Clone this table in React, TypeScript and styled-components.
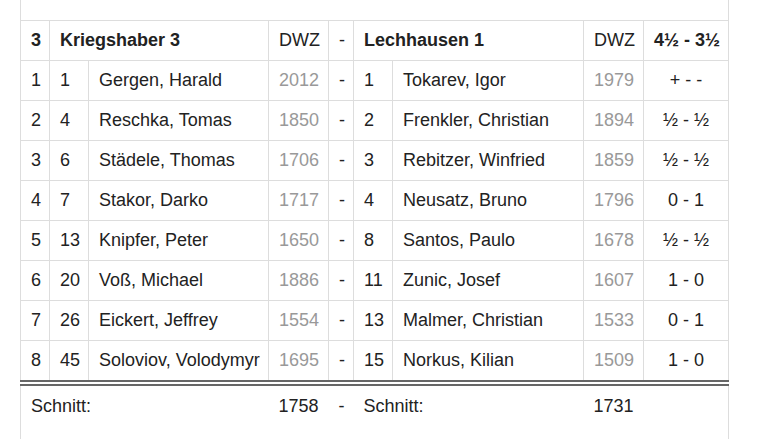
import React from "react";
import styled, { createGlobalStyle } from "styled-components";

const Global = createGlobalStyle`
  html, body { margin: 0; padding: 0; background: #fff; }
  body { font-family: "Liberation Sans", Arial, sans-serif; color: #222; }
`;

const Wrapper = styled.div`
  padding-left: 20px;
  width: 708px;
`;

const Table = styled.table`
  border-collapse: collapse;
  table-layout: fixed;
  width: 708px;
  border-left: 1px solid #ddd;
  border-right: 1px solid #ddd;
  font-size: 18px;
`;

const SpacerRow = styled.tr<{ $h: number }>`
  height: ${(p) => p.$h}px;
  td { padding: 0; border: none; }
`;

const HeadRow = styled.tr`
  border-top: 1px solid #666;
  height: 40px;
`;

const BodyRow = styled.tr<{ $last?: boolean }>`
  height: ${(p) => (p.$last ? 43 : 40)}px;
`;

const FootRow = styled.tr`
  border-top: 6px double #666;
  height: 43px;
`;

const Cell = styled.td<{ $align?: "left" | "center" | "right"; $bold?: boolean; $muted?: boolean; $plain?: boolean }>`
  padding: 0 10px;
  border: ${(p) => (p.$plain ? "none" : "1px solid #ddd")};
  text-align: ${(p) => p.$align ?? "left"};
  font-weight: ${(p) => (p.$bold ? 700 : 400)};
  color: ${(p) => (p.$muted ? "#999" : "#222")};
  white-space: nowrap;
  vertical-align: middle;
`;

type Pair = [string, string, string, string, string, string, string, string];

const rows: Pair[] = [
  ["1", "1", "Gergen, Harald", "2012", "1", "Tokarev, Igor", "1979", "+ - -"],
  ["2", "4", "Reschka, Tomas", "1850", "2", "Frenkler, Christian", "1894", "½ - ½"],
  ["3", "6", "Städele, Thomas", "1706", "3", "Rebitzer, Winfried", "1859", "½ - ½"],
  ["4", "7", "Stakor, Darko", "1717", "4", "Neusatz, Bruno", "1796", "0 - 1"],
  ["5", "13", "Knipfer, Peter", "1650", "8", "Santos, Paulo", "1678", "½ - ½"],
  ["6", "20", "Voß, Michael", "1886", "11", "Zunic, Josef", "1607", "1 - 0"],
  ["7", "26", "Eickert, Jeffrey", "1554", "13", "Malmer, Christian", "1533", "0 - 1"],
  ["8", "45", "Soloviov, Volodymyr", "1695", "15", "Norkus, Kilian", "1509", "1 - 0"],
];

const widths = [29, 39, 180, 60, 25, 39, 191, 60, 85];

export default function App() {
  return (
    <>
      <Global />
      <Wrapper>
        <Table>
          <colgroup>
            {widths.map((w, i) => (
              <col key={i} style={{ width: w }} />
            ))}
          </colgroup>
          <tbody>
            <SpacerRow $h={20}>
              <td colSpan={9} />
            </SpacerRow>
            <HeadRow>
              <Cell $bold>3</Cell>
              <Cell $bold colSpan={2}>Kriegshaber 3</Cell>
              <Cell $align="center">DWZ</Cell>
              <Cell $align="center">-</Cell>
              <Cell $bold colSpan={2}>Lechhausen 1</Cell>
              <Cell $align="center">DWZ</Cell>
              <Cell $bold $align="center">4½ - 3½</Cell>
            </HeadRow>
            {rows.map((r, i) => (
              <BodyRow key={r[0]} $last={i === rows.length - 1}>
                <Cell>{r[0]}</Cell>
                <Cell>{r[1]}</Cell>
                <Cell>{r[2]}</Cell>
                <Cell $align="center" $muted>{r[3]}</Cell>
                <Cell $align="center">-</Cell>
                <Cell>{r[4]}</Cell>
                <Cell>{r[5]}</Cell>
                <Cell $align="center" $muted>{r[6]}</Cell>
                <Cell $align="center">{r[7]}</Cell>
              </BodyRow>
            ))}
            <FootRow>
              <Cell $plain colSpan={3}>Schnitt:</Cell>
              <Cell $plain $align="center">1758</Cell>
              <Cell $plain $align="center">-</Cell>
              <Cell $plain colSpan={2}>Schnitt:</Cell>
              <Cell $plain $align="center">1731</Cell>
              <Cell $plain />
            </FootRow>
            <SpacerRow $h={30}>
              <td colSpan={9} />
            </SpacerRow>
          </tbody>
        </Table>
      </Wrapper>
    </>
  );
}
